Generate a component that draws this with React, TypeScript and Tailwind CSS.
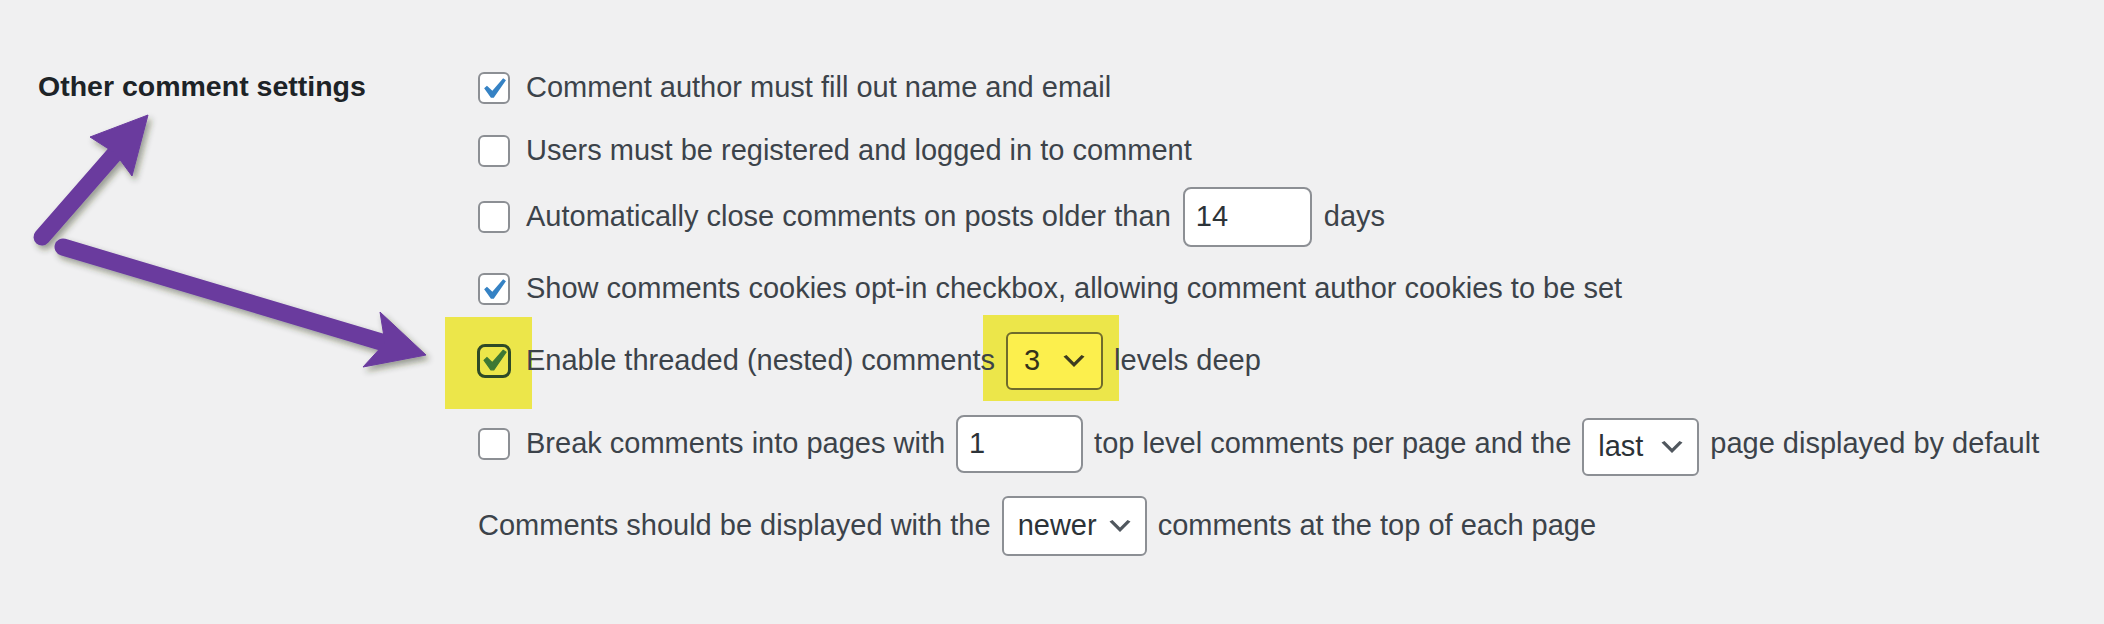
import React from "react";

const CHECK = "M14.83 4.89l1.34.94-5.81 8.38H9.02L5.78 9.67l1.34-1.25 2.57 2.4z";
const CHEV = "M5 6l5 5 5-5 2 1-7 7-7-7 2-1z";

function Checkbox({ checked }: { checked?: boolean }) {
  return (
    <span className="relative inline-block w-[32px] h-[32px] shrink-0 rounded-[6px] border-2 border-[#8c8f94] bg-white mr-[16px]">
      {checked && (
        <svg viewBox="0 0 20 20" className="absolute left-[-8px] top-[-6px] w-[42px] h-[42px]">
          <path d={CHECK} fill="#3582c4" />
        </svg>
      )}
    </span>
  );
}

function TextInput({ value, w, h }: { value: string; w: string; h: string }) {
  return (
    <span className={`flex items-center ${w} ${h} shrink-0 rounded-[8px] border-2 border-[#8c8f94] bg-white pl-[11px] text-[#2c3338]`}>
      {value}
    </span>
  );
}

function Select({ value, w, h }: { value: string; w: string; h: string }) {
  return (
    <span className={`flex items-center justify-between ${w} ${h} shrink-0 rounded-[6px] border-2 border-[#8c8f94] bg-white pl-[14px] pr-[10px] text-[#2c3338]`}>
      <span>{value}</span>
      <svg viewBox="0 0 20 20" className="w-[30px] h-[30px]">
        <path d={CHEV} fill="#50575e" />
      </svg>
    </span>
  );
}

export default function App() {
  return (
    <div className="relative isolate w-[2104px] h-[624px] overflow-hidden bg-[#f0f0f1] font-['Liberation_Sans',Arial,sans-serif]">
      <div className="flex pt-[56px]">
        <div className="w-[478px] shrink-0 pl-[38px]">
          <div className="flex h-[60px] items-center text-[28.5px] font-bold text-[#1d2327]">
            Other comment settings
          </div>
        </div>
        <div className="flex flex-col text-[29px] text-[#3c434a]">
          <div className="flex h-[63px] items-center">
            <Checkbox checked />
            <span>Comment author must fill out name and email</span>
          </div>
          <div className="flex h-[63px] items-center">
            <Checkbox />
            <span>Users must be registered and logged in to comment</span>
          </div>
          <div className="flex h-[70px] items-center">
            <Checkbox />
            <div className="flex items-center gap-[12px]">
              <span>Automatically close comments on posts older than</span>
              <TextInput value="14" w="w-[129px]" h="h-[60px]" />
              <span>days</span>
            </div>
          </div>
          <div className="flex h-[74px] items-center">
            <Checkbox checked />
            <span>Show comments cookies opt-in checkbox, allowing comment author cookies to be set</span>
          </div>
          <div className="flex h-[70px] items-center">
            <span className="relative ml-[-1px] mr-[15px] inline-block w-[34px] h-[34px] shrink-0">
              <span className="absolute left-[-32px] top-[-27px] -z-10 w-[87px] h-[92px] bg-[#ece64a]" />
              <span className="absolute inset-0 rounded-[8px] border-[3px] border-[#2e4a27]" />
              <svg viewBox="0 0 20 20" className="absolute left-[-5px] top-[-4px] w-[42px] h-[42px]">
                <path d={CHECK} fill="#3d7834" stroke="#3d7834" strokeWidth="0.6" />
              </svg>
            </span>
            <div className="flex items-center gap-[11px]">
              <span>Enable threaded (nested) comments</span>
              <span className="relative inline-flex shrink-0">
                <span className="absolute left-[-23px] top-[-17px] -z-10 w-[136px] h-[86px] bg-[#ece64a]" />
                <span className="flex items-center justify-between w-[97px] h-[58px] rounded-[6px] border-2 border-[#6f6b2c] bg-[#fcef4d] pl-[16px] pr-[12px] text-[#33321c]">
                  <span>3</span>
                  <svg viewBox="0 0 20 20" className="w-[30px] h-[30px]">
                    <path d={CHEV} fill="#3d3b20" />
                  </svg>
                </span>
              </span>
              <span>levels deep</span>
            </div>
          </div>
          <div className="flex h-[96px] items-center">
            <Checkbox />
            <div className="flex items-center gap-[11px]">
              <span>Break comments into pages with</span>
              <TextInput value="1" w="w-[127px]" h="h-[58px]" />
              <span>top level comments per page and the</span>
              <span className="mt-[6px]">
                <Select value="last" w="w-[117px]" h="h-[58px]" />
              </span>
              <span>page displayed by default</span>
            </div>
          </div>
          <div className="flex h-[68px] items-center gap-[11px]">
            <span>Comments should be displayed with the</span>
            <Select value="newer" w="w-[145px]" h="h-[60px]" />
            <span>comments at the top of each page</span>
          </div>
        </div>
      </div>

      <svg
        className="pointer-events-none absolute left-0 top-0 w-[480px] h-[400px]"
        viewBox="0 0 480 400"
      >
        <defs>
          <filter id="sh" x="-20%" y="-20%" width="140%" height="140%">
            <feDropShadow dx="3" dy="4" stdDeviation="3" floodColor="#2a3315" floodOpacity="0.45" />
          </filter>
        </defs>
        <g filter="url(#sh)" fill="#6a3b9e" stroke="#6a3b9e">
          <line x1="42" y1="237" x2="118" y2="150" strokeWidth="17" strokeLinecap="round" />
          <polygon points="148,115 90,137 115,153 132,176" strokeWidth="1" strokeLinejoin="round" />
          <line x1="63" y1="247" x2="388" y2="344" strokeWidth="17" strokeLinecap="round" />
          <polygon points="426,355 380,312 385,343 363,367" strokeWidth="1" strokeLinejoin="round" />
        </g>
      </svg>
    </div>
  );
}
